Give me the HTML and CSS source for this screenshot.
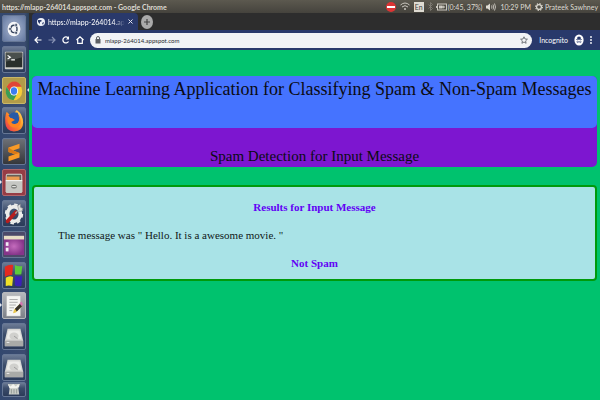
FILE: index.html
```
<!DOCTYPE html>
<html lang="en">
<head>
<meta charset="utf-8">
<title>https://mlapp-264014.appspot.com - Google Chrome</title>
<link rel="stylesheet" href="styles.css">
</head>
<body>
<div class="desktop">
  <header class="panel">
    <span class="panel-title">https://mlapp-264014.appspot.com - Google Chrome</span>
    <div class="indicators">
      <svg width="10" height="10" viewBox="0 0 10 10"><circle cx="5" cy="5" r="5" fill="#dc3434"/><rect x="1" y="4" width="8" height="2" fill="#fff"/></svg>
      <svg class="wifi" width="10" height="9" viewBox="0 0 10 9" fill="none" stroke="#c9c6be"><path d="M.5 3Q5-1 9.500 3M2 5Q5 2.300 8 5"/><circle cx="5" cy="7" r="1" fill="#c9c6be" stroke="none"/></svg>
      <span class="lang">En</span>
      <svg class="bluetooth" width="5" height="9" viewBox="0 0 5 9" fill="none" stroke="#85827a" stroke-width=".8"><path d="M.5 2.500l4 4-2 2V.5l2 2-4 4"/></svg>
      <svg width="12" height="8" viewBox="0 0 12 8"><rect x="1.500" y="1" width="9" height="6" fill="none" stroke="#c9c6be"/><path d="M0 3h1v2H0zM3 2.500h3v3H3z" fill="#c9c6be"/><path d="M5 4h4M7 2.500v3" stroke="#dedbd2"/></svg>
      <span class="battery-text">(0:45, 37%)</span>
      <svg class="sound" width="10" height="8" viewBox="0 0 10 8" fill="none" stroke="#dedbd2"><path d="M0 2.500h1.500L4 .5v7L1.500 5.500H0z" fill="#dedbd2" stroke="none"/><path d="M5.500 2.500q1 1.500 0 3M7 1.500q1.500 2.500 0 5M8.500.5q2 3.500 0 7" stroke-width=".8"/></svg>
      <span class="clock">10:29 PM</span>
      <svg width="8" height="8" viewBox="0 0 8 8" fill="none" stroke="#dedbd2"><circle cx="4" cy="4" r="2.400" stroke-width="1.200"/><circle cx="4" cy="4" r="3.400" stroke-dasharray="1.300 1.370" stroke-width="1.100"/></svg>
      <span class="user">Prateek Sawhney</span>
    </div>
  </header>

  <nav class="launcher" aria-label="Launcher">
    <div class="apps">
      <button class="tile dash" aria-label="Dash"><svg viewBox="0 0 24 27"><ellipse cx="12" cy="14" rx="9" ry="10" fill="#8999b8" opacity=".7"/><ellipse cx="12" cy="14" rx="7" ry="8" fill="#f6f7f9"/><ellipse cx="12" cy="14" rx="3.300" ry="4" fill="none" stroke="#35435d" stroke-width="1.500"/><circle cx="7.700" cy="14" r="1.600" fill="#35435d" stroke="#f6f7f9" stroke-width=".8"/><circle cx="14.300" cy="9.700" r="1.600" fill="#35435d" stroke="#f6f7f9" stroke-width=".8"/><circle cx="14.300" cy="18.300" r="1.600" fill="#35435d" stroke="#f6f7f9" stroke-width=".8"/></svg></button>
      <button class="tile" aria-label="Terminal"><svg viewBox="0 0 24 27"><rect x="2" y="5" width="20" height="19" rx="1" fill="#cfcfca"/><rect x="3" y="6" width="18" height="16" fill="#292f2c"/><path d="M3 6h18v5L3 16z" fill="#4a504d"/><path d="M5 9l3 2-3 2M9 14h4" fill="none" stroke="#fff" stroke-width="1.300"/></svg></button>
      <button class="tile chrome running active" aria-label="Google Chrome"><svg viewBox="0 0 24 27"><ellipse cx="12" cy="14" rx="9" ry="10" fill="#f6cc38"/><path d="M4 9.500C8 1.500 17 2 20.200 9.500H12L8 16z" fill="#df4537"/><path d="M4 9.500C1 17 5 24 11.500 24l4-7L12 19 8 16z" fill="#3c9b55"/><ellipse cx="12" cy="14" rx="4.500" ry="5" fill="#fff"/><ellipse cx="12" cy="14" rx="3.500" ry="4" fill="#3d7df0"/></svg></button>
      <button class="tile" aria-label="Firefox"><svg viewBox="0 0 24 27"><defs><linearGradient id="fox" x1="1" y1="0" x2="0" y2="1"><stop stop-color="#ffe45b"/><stop offset=".5" stop-color="#ff8d24"/><stop offset="1" stop-color="#e92a58"/></linearGradient></defs><path d="M3 7l1-3 3 3q2-2 4-2l-1 3 5-6q7 5 7 14 0 9-10 9.500Q3 25 2.500 16 2 10 3 7z" fill="url(#fox)"/><path d="M6 8q4-5 10-3l2 5q0 8-6 9-5 0-6-5l3-2z" fill="#275aa7"/><path d="M5 10l5 1 3 2-4 2q1 3 5 2 5-1 3-9 6 10-3 13-6 1-9-6z" fill="#ff8420"/></svg></button>
      <button class="tile sublime" aria-label="Sublime Text"><svg viewBox="0 0 24 27"><path d="M6 9l12-4v5l-7 2.500 7 2.500v5L6 24v-5l7-2.500L6 14z" fill="#f89a27"/><path d="M6 9v5l7 2.500 5-1.500-7-2.500z" fill="#d97817"/></svg></button>
      <button class="tile files running" aria-label="Files"><svg viewBox="0 0 24 27"><rect x="3" y="4" width="18" height="21" rx="2" fill="#dfdfdb"/><rect x="4" y="5" width="16" height="6" fill="#655e56"/><path d="M4 7h14v4H4z" fill="#e99b51"/><path d="M3 11h18v12q0 2-2 2H5q-2 0-2-2z" fill="#c6c7c3"/><path d="M3 11.500h18" stroke="#fff"/><rect x="9" y="16" width="6" height="4" rx="2" fill="#757773"/><path d="M10 18h4" stroke="#fff"/></svg></button>
      <button class="tile" aria-label="System Settings"><svg viewBox="0 0 24 27"><ellipse cx="12" cy="14" rx="7" ry="8" fill="none" stroke="#ededeb" stroke-width="4"/><ellipse cx="12" cy="14" rx="9" ry="10.500" fill="none" stroke="#ededeb" stroke-width="2" stroke-dasharray="4 3.650"/><path d="M5 22l9-10" stroke="#b81e1e" stroke-width="4" stroke-linecap="round"/><path d="M13 13l4-4-1-4 3-2v4l3 1-2 3-4 0-2 3z" fill="#dedfdd" stroke="#777" stroke-width=".5"/></svg></button>
      <button class="tile workspace" aria-label="Workspace"><svg viewBox="0 0 24 27"><defs><radialGradient id="plum"><stop stop-color="#c56cbd"/><stop offset="1" stop-color="#86358a"/></radialGradient></defs><rect x="1" y="6" width="22" height="19" fill="url(#plum)"/><rect x="1" y="4" width="22" height="4" fill="#e8ddc4"/><rect x="3" y="11" width="3" height="4" fill="#f3edf5"/><rect x="3" y="17" width="3" height="4" fill="#f3edf5"/></svg></button>
      <button class="tile" aria-label="Windows"><svg viewBox="0 0 24 27"><path d="M2 4q5-3 9-2l-1 11q-5 0-8 2z" fill="#e52a20"/><path d="M13 2q4 2 8 1l-1 9q-4 1-7 0z" fill="#5dcb3b"/><path d="M3 16q4-3 8-1l-1 10q-4-1-7 0z" fill="#efe127"/><path d="M13 14q4 1 8 0l-1 11q-4 1-7-1z" fill="#3c20b8"/></svg></button>
      <button class="tile editor running" aria-label="Text Editor"><svg viewBox="0 0 24 27"><rect x="4" y="3" width="15" height="22" fill="#f5f5f3" stroke="#bbb" stroke-width=".5"/><path d="M7 7h9M7 10h9M7 13h7M7 16h5M7 19h3" stroke="#a6a6a6"/><path d="M11 22l1-4 7-7 2 3-7 7z" fill="#e8c54c"/><path d="M13 17l6-6 2 3-6 6z" fill="#34312d"/><path d="M18 11l2-2 2 3-2 2z" fill="#d375b1"/></svg></button>
      <button class="tile" aria-label="Disk"><svg viewBox="0 0 24 27"><path d="M5 5h14l3 13v6H2v-6z" fill="#d7d7d4"/><path d="M2 18h20v6H2z" fill="#a9aaa8"/><path d="M6 7h12l2 9H4z" fill="#ecece9"/><ellipse cx="12" cy="13" rx="5" ry="4" fill="#d0d0cd"/><path d="M12 13l4 3" stroke="#999"/><path d="M4 20h3" stroke="#eee"/></svg></button>
      <button class="tile" aria-label="Disk"><svg viewBox="0 0 24 27"><path d="M5 5h14l3 13v6H2v-6z" fill="#d7d7d4"/><path d="M2 18h20v6H2z" fill="#a9aaa8"/><path d="M6 7h12l2 9H4z" fill="#ecece9"/><ellipse cx="12" cy="13" rx="5" ry="4" fill="#d0d0cd"/><path d="M12 13l4 3" stroke="#999"/><path d="M4 20h3" stroke="#eee"/></svg></button>
    </div>
    <button class="tile trash" aria-label="Trash"><svg viewBox="0 0 24 16"><path d="M5 1h14l-2 5 1 7H6l1-7z" fill="#c7cbc6"/><path d="M5 1l3 3 3-3 3 3 3-3 1 3-3 2H7z" fill="#f2f3ef"/><path d="M9 7v5M12 7v5M15 7v5" stroke="#8e9690"/></svg></button>
  </nav>

  <div class="browser">
    <div class="tabs">
      <div class="tab">
        <svg width="8" height="8" viewBox="0 0 8 8"><circle cx="4" cy="4" r="4" fill="#eef1f8"/><path d="M1 2l3 0 1 1-2 1v2L1 4zM5 5l2-1-1 3z" fill="#29396b"/></svg>
        <span class="tab-title">https://mlapp-264014.ap</span>
        <button class="tab-close" aria-label="Close tab"><svg width="5" height="5" viewBox="0 0 5 5"><path d="M.5.5l4 4M4.500.5l-4 4" stroke="#dfe3f0"/></svg></button>
      </div>
      <button class="new-tab" aria-label="New tab"><svg width="12" height="14" viewBox="0 0 12 14"><ellipse cx="6" cy="7" rx="6" ry="7" fill="#aaa"/><path d="M6 4v6M3 7h6" stroke="#444" stroke-width="1.200"/></svg></button>
    </div>
    <div class="toolbar">
      <button aria-label="Back"><svg width="8" height="8" viewBox="0 0 8 8" fill="none" stroke="#fff" stroke-width="1.200"><path d="M7.500 4H1M4 1L1 4l3 3"/></svg></button>
      <button aria-label="Forward"><svg width="8" height="8" viewBox="0 0 8 8" fill="none" stroke="#8792b3" stroke-width="1.200"><path d="M.5 4H7M4 1l3 3-3 3"/></svg></button>
      <button aria-label="Reload"><svg width="8" height="8" viewBox="0 0 8 8"><path d="M6.500 5.500A3 3 0 1 1 6 1.800" fill="none" stroke="#fff" stroke-width="1.300"/><path d="M7 0v3.500H4z" fill="#fff"/></svg></button>
      <button aria-label="Home"><svg width="8" height="8" viewBox="0 0 8 8" fill="none" stroke="#fff" stroke-width="1.200"><path d="M.5 4L4 .8 7.500 4M1.700 3.500v3.800h4.600V3.500"/></svg></button>
      <form class="address">
        <svg width="6" height="8" viewBox="0 0 6 8"><rect x=".5" y="3" width="5" height="4.500" fill="#5d6064"/><path d="M1.500 3V2a1.500 1.500 0 0 1 3 0v1" fill="none" stroke="#5d6064"/></svg>
        <input type="text" value="mlapp-264014.appspot.com" aria-label="Address">
        <button type="button" aria-label="Bookmark"><svg width="8" height="8" viewBox="0 0 8 8"><path d="M4 .8l1 2.200 2.400.2-1.800 1.700.5 2.400L4 6 1.900 7.300l.5-2.400L.6 3.200 3 3z" fill="none" stroke="#555a60" stroke-width=".8"/></svg></button>
      </form>
      <span class="incognito">Incognito</span>
      <svg width="10" height="12" viewBox="0 0 10 12"><ellipse cx="5" cy="6" rx="4.600" ry="5.600" fill="#fff"/><path d="M3.500 5l.3-2h2.400l.3 2zM2 5.500h6" fill="#29396b" stroke="#29396b" stroke-width=".6"/><circle cx="3.700" cy="7.800" r=".8" fill="none" stroke="#29396b" stroke-width=".6"/><circle cx="6.300" cy="7.800" r=".8" fill="none" stroke="#29396b" stroke-width=".6"/></svg>
      <button class="more" aria-label="Menu"><svg width="2" height="8" viewBox="0 0 2 8" fill="#fff"><circle cx="1" cy="1" r=".9"/><circle cx="1" cy="4" r=".9"/><circle cx="1" cy="7" r=".9"/></svg></button>
    </div>
    <main class="page">
      <div class="banner">
        <h1>Machine Learning Application for Classifying Spam &amp; Non-Spam Messages</h1>
        <h2>Spam Detection for Input Message</h2>
      </div>
      <section class="results">
        <h3>Results for Input Message</h3>
        <p>The message was " Hello. It is a awesome movie. "</p>
        <h3>Not Spam</h3>
      </section>
    </main>
  </div>
</div>
</body>
</html>
```
FILE: styles.css
```
* { box-sizing: border-box; }

body {
  margin: 0;
  font-family: Lato, "Noto Sans", sans-serif;
  font-size: 7px;
}

button {
  display: flex;
  align-items: center;
  justify-content: center;
  padding: 0;
  border: 0;
  background: none;
}

svg { display: block; flex: none; }

.desktop {
  display: grid;
  grid-template-columns: 29px 1fr;
  grid-template-rows: 13px 1fr;
  min-height: 100vh;
}

/* Top panel */
.panel {
  grid-column: 1 / -1;
  display: flex;
  align-items: center;
  justify-content: space-between;
  padding: 0 2px;
  background: linear-gradient(#5c594f, #45433d);
  color: #dedbd2;
  line-height: 12px;
  white-space: nowrap;
}

.panel-title { font-weight: 700; }

.indicators { display: flex; align-items: center; }
.wifi { margin-left: 4px; }

.lang {
  margin: 0 4px;
  padding: 0 1px;
  background: #dedbd2;
  color: #45433d;
  line-height: 10px;
}

.bluetooth { margin-right: 3px; }
.battery-text { margin-right: 4px; }
.sound { margin-right: 4px; }
.clock { margin-right: 4px; }
.user { margin-left: 2px; }

/* Launcher */
.launcher {
  display: flex;
  flex-direction: column;
  gap: 1px;
  padding: 2px 3px 3px 2px;
  background: linear-gradient(90deg, #33486f, #3b4c70 85%, #29415b);
}

.apps {
  flex: 1;
  display: flex;
  flex-direction: column;
  justify-content: space-between;
}

.tile {
  position: relative;
  width: 24px;
  height: 27px;
  border: 1px solid #667795;
  border-radius: 2px;
  background: linear-gradient(#6c7b95, #3c4d6b 40%, #2b3b59);
}

.tile svg { width: 22px; height: 25px; }
.dash { background: radial-gradient(#aab9d3, #63779f); }
.chrome { background: #b29b49; border-color: #c9b768; }
.sublime { background: linear-gradient(#6d7076, #35373b); }
.files { background: #963c45; border-color: #b1656b; }
.workspace { background: #4c4969; }
.editor { background: linear-gradient(#b7b9bd, #7c8088); border-color: #b7b9bd; }

.running::before,
.active::after {
  content: "";
  position: absolute;
  top: 10px;
  border: 2px solid transparent;
}

.running::before { left: -3px; border-left-color: #e6eaf2; }
.active::after { right: -4px; border-right-color: #e6eaf2; }

.trash { height: 15px; }
.trash svg { width: 22px; height: 14px; }

/* Browser */
.browser {
  display: flex;
  flex-direction: column;
  min-width: 0;
}

.tabs {
  display: flex;
  align-items: center;
  height: 17px;
  padding-left: 3px;
  background: #2d2d2d;
}

.tab {
  display: flex;
  align-items: center;
  align-self: stretch;
  gap: 3px;
  width: 106px;
  padding: 0 5px;
  border-radius: 4px 4px 0 0;
  background: #29396b;
  color: #fff;
}

.tab-title {
  flex: 1;
  white-space: nowrap;
  mask-image: linear-gradient(90deg, #000 85%, transparent);
}

.new-tab { margin-left: 3px; }

.toolbar {
  display: flex;
  align-items: center;
  gap: 6px;
  height: 20px;
  padding: 0 8px 0 5px;
  background: #29396b;
  color: #fff;
}

.address {
  flex: 1;
  display: flex;
  align-items: center;
  gap: 4px;
  height: 15px;
  padding: 0 4px 0 5px;
  border-radius: 8px;
  background: #f1f3f5;
}

.address input {
  flex: 1;
  min-width: 0;
  padding: 0;
  border: 0;
  background: none;
  color: #292c31;
  font: inherit;
  font-size: 6px;
}

.incognito { margin-left: 1px; }

/* Page */
.page {
  flex: 1;
  padding: 26px 3px 0;
  background: #00c26e;
  font-family: "Liberation Serif", serif;
}

.banner {
  border-radius: 5px;
  background: #7d16d0;
  color: #0b0b12;
  text-align: center;
}

h1, h2, h3, p { margin: 0; }

h1 {
  padding-bottom: 26px;
  border-radius: 5px;
  background: #4573ff;
  font-size: 18px;
  font-weight: 400;
  line-height: 26px;
}

h2 {
  padding-top: 18px;
  font-size: 15px;
  font-weight: 400;
  line-height: 21px;
}

.results {
  display: flex;
  flex-direction: column;
  gap: 12px;
  margin-top: 18px;
  padding: 12px 24px 8px;
  border: 2px solid #009a0c;
  border-radius: 4px;
  background: #a9e3e7;
}

h3 {
  color: #6200f5;
  font-size: 11px;
  line-height: 16px;
  text-align: center;
}

p {
  color: #101818;
  font-size: 11px;
  line-height: 16px;
}
```
